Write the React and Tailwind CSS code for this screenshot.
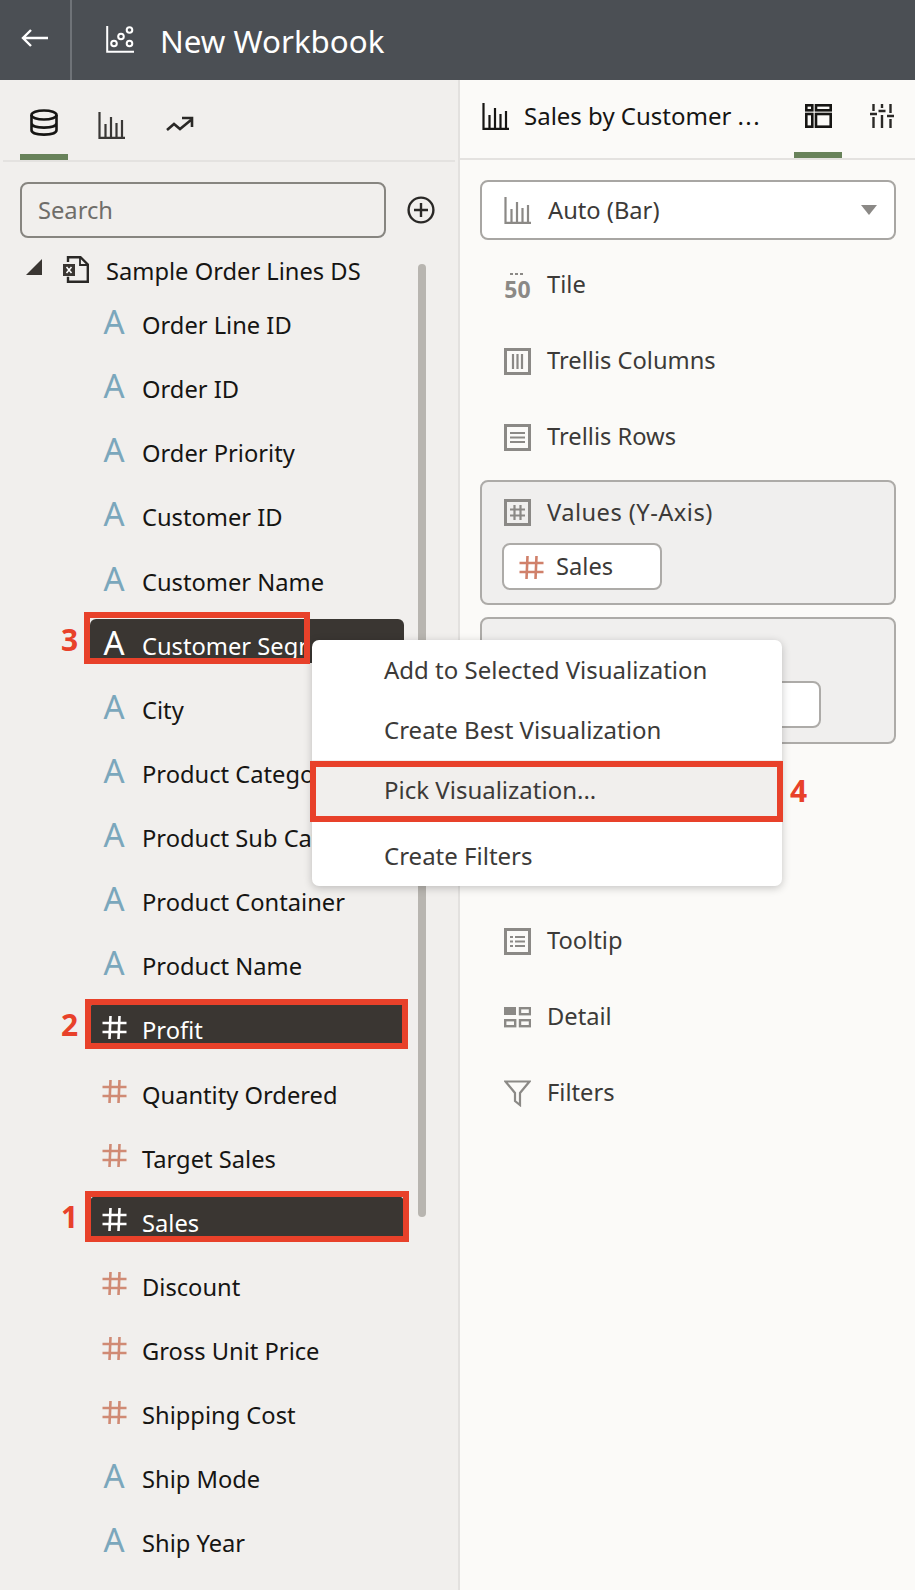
import React from "react";

const Bars = ({ c = "#161513", className = "" }) => (
  <svg viewBox="0 0 27 27" className={className} fill="none" stroke={c} strokeWidth="2.2">
    <path d="M1.5 0v25.8h25.5" />
    <path d="M7.5 12v13M13 5v20M18.5 11v14M24 8v17" strokeWidth="2.2" />
  </svg>
);

const HashIcon = ({ c = "#d08a74" }) => (
  <svg viewBox="0 0 25 25" className="w-[25px] h-[25px]" fill="none" stroke={c} strokeWidth="2.6">
    <path d="M0.5 8h24M0.5 17h24M8.5 1l-1 23M17.5 1l-1 23" />
  </svg>
);

const GrayBox = ({ children }) => (
  <svg viewBox="0 0 27 27" className="w-[27px] h-[27px] shrink-0" fill="none" stroke="#8b8986" strokeWidth="2.2">
    <rect x="1.5" y="1.5" width="24" height="24" strokeWidth="3" />
    {children}
  </svg>
);

const TileIcon = () => (
  <svg viewBox="0 0 27 27" className="w-[27px] h-[27px] shrink-0 overflow-visible">
    <path d="M6 2h3M11 2h3M16 2h3" stroke="#8b8986" strokeWidth="2" />
    <text x="13.5" y="26" textAnchor="middle" fontFamily="Noto Sans" fontWeight="700" fontSize="23" fill="#8b8986">50</text>
  </svg>
);

const fields = [
  ["A", "Order Line ID"],
  ["A", "Order ID"],
  ["A", "Order Priority"],
  ["A", "Customer ID"],
  ["A", "Customer Name"],
  ["A", "Customer Segment", true],
  ["A", "City"],
  ["A", "Product Category"],
  ["A", "Product Sub Category"],
  ["A", "Product Container"],
  ["A", "Product Name"],
  ["#", "Profit", true],
  ["#", "Quantity Ordered"],
  ["#", "Target Sales"],
  ["#", "Sales", true],
  ["#", "Discount"],
  ["#", "Gross Unit Price"],
  ["#", "Shipping Cost"],
  ["A", "Ship Mode"],
  ["A", "Ship Year"],
];

const FieldRow = ({ kind, label, selected }) => (
  <div className="h-[64.13px] ml-[90px] w-[314px] pt-[4px]">
    <div className={`h-[44px] flex items-start rounded-t-[6px] ${selected ? "bg-[#3a3632]" : ""}`}>
      <div className="w-[52px] h-[36px] flex items-center justify-center shrink-0 pr-[4px] pt-[12px]">
        {kind === "A" ? (
          <span className={`text-[33px] leading-[32px] ${selected ? "text-white" : "text-[#7ba7bc]"}`}>A</span>
        ) : (
          <HashIcon c={selected ? "#ffffff" : "#d08a74"} />
        )}
      </div>
      <span className={`whitespace-nowrap text-[23.7px] leading-[32px] mt-[11px] ${selected ? "text-white max-w-[165px] overflow-hidden" : "text-[#161513]"}`}>{label}</span>
    </div>
  </div>
);

const DropRow = ({ icon, label }) => (
  <div className="h-[76px] flex items-center gap-[16px] pl-[44px] text-[23.7px] text-[#3c3a38]">
    {icon}
    <span>{label}</span>
  </div>
);

const Box = ({ className, children }) => (
  <div className={`ml-[20px] mr-[19px] rounded-[8px] border-2 border-[#adaba8] bg-[#f0efee] ${className}`}>{children}</div>
);

const RedBox = ({ className }) => <div className={`absolute border-[6px] border-[#e8412a] ${className}`} />;
const Num = ({ className, children }) => (
  <div className={`absolute text-[30px] leading-[36px] font-bold text-[#e8412a] ${className}`}>{children}</div>
);

export default function App() {
  return (
    <div className="relative w-[915px] h-[1590px] overflow-hidden bg-[#fbfaf8] font-['Noto_Sans',sans-serif]">
      <header className="h-[80px] bg-[#4b4f54] flex items-center text-white">
        <div className="w-[72px] h-full border-r-2 border-[#6f7378] flex items-center pl-[21px]">
          <svg viewBox="0 0 27 20" className="w-[27px] h-[20px] mt-[-4px]" fill="none" stroke="#fff" strokeWidth="2.4">
            <path d="M27 10H2M10 2l-8 8 8 8" />
          </svg>
        </div>
        <svg viewBox="0 0 28 27" className="w-[28px] h-[27px] ml-[34px] mt-[-2px]" fill="none" stroke="#fff" strokeWidth="2">
          <path d="M1.2 0v25.8h27" />
          <circle cx="8" cy="17.5" r="2.8" />
          <circle cx="15" cy="10.5" r="2.8" />
          <circle cx="23.5" cy="4" r="2.8" />
          <circle cx="23.5" cy="17.5" r="2.8" />
        </svg>
        <h1 className="ml-[26px] mt-[1px] text-[31.3px] leading-[40px] font-normal">New Workbook</h1>
      </header>

      <div className="flex h-[1510px]">
        <aside className="w-[460px] shrink-0 bg-[#f1efed] border-r-2 border-[#e3e1df]">
          <div className="h-[82px] mx-[3px] border-b-2 border-[#e4e2e0] flex items-start pl-[17px]">
            <div className="w-[48px] h-[80px] border-b-[6px] border-[#68825a] flex items-center justify-center">
              <svg viewBox="0 0 28 27" className="w-[28px] h-[27px] mt-[10px]" fill="none" stroke="#161513" strokeWidth="2.6">
                <ellipse cx="14" cy="6" rx="12.5" ry="4.5" />
                <path d="M1.5 6v15c0 3 5.5 4.6 12.5 4.6s12.5-1.6 12.5-4.6V6M1.5 14c0 3 5.5 4.6 12.5 4.6s12.5-1.6 12.5-4.6" />
              </svg>
            </div>
            <div className="ml-[30px] h-[80px] flex items-center">
              <Bars c="#3a3836" className="w-[27px] h-[27px] mt-[10px]" />
            </div>
            <div className="ml-[41px] h-[80px] flex items-center">
              <svg viewBox="0 0 28 20" className="w-[28px] h-[20px] mt-[10px]" fill="none" stroke="#2a2826" strokeWidth="2.6">
                <path d="M1 15l7-6 6 5 11-9M16 3h10v9" />
              </svg>
            </div>
          </div>

          <div className="flex items-center mt-[20px] pl-[20px]">
            <div className="w-[366px] h-[56px] rounded-[8px] border-2 border-[#878580] flex items-center pl-[16px] pt-[2px] text-[23.7px] text-[#6f6d69]">Search</div>
            <svg viewBox="0 0 28 28" className="w-[28px] h-[28px] ml-[21px]" fill="none" stroke="#2a2826" strokeWidth="2.4">
              <circle cx="14" cy="14" r="12.4" />
              <path d="M14 7v14M7 14h14" strokeWidth="2.4" />
            </svg>
          </div>

          <div className="h-[56px] mt-[6px] flex items-center text-[23.7px] text-[#161513] pl-[26px] w-[430px]">
            <svg viewBox="0 0 16 16" className="w-[16px] h-[16px] mb-[10px]"><path d="M16 0v16H0z" fill="#3a3632" /></svg>
            <svg viewBox="0 0 26 27" className="w-[26px] h-[27px] ml-[21px] mb-[5px]" fill="none" stroke="#2a2826" strokeWidth="2.4">
              <path d="M5 6V1.2h12.5l7.3 7.3v17.3H5v-5" />
              <path d="M17 1v8h8" strokeWidth="1.8" />
              <rect x="0" y="8" width="12" height="12" fill="#3a3632" stroke="none" />
              <path d="M3.5 11l5 6M8.5 11l-5 6" stroke="#fff" strokeWidth="1.6" />
            </svg>
            <span className="ml-[17px] whitespace-nowrap">Sample Order Lines DS</span>
          </div>

          <div className="mt-[-6px]">
            {fields.map(([kind, label, sel]) => (
              <FieldRow key={label} kind={kind} label={label} selected={sel} />
            ))}
          </div>
        </aside>

        <main className="flex-1">
          <div className="h-[80px] border-b-2 border-[#e4e2e0] flex items-start">
            <div className="h-[72px] flex items-center pl-[22px]">
              <Bars className="w-[27px] h-[27px]" />
            </div>
            <div className="h-[72px] flex items-center ml-[15px] text-[24px] text-[#161513] w-[270px] whitespace-nowrap">
              Sales by Customer <span className="ml-[6px] tracking-[1.5px]">...</span>
            </div>
            <div className="w-[48px] h-[78px] border-b-[6px] border-[#68825a] flex items-center justify-center">
              <svg viewBox="0 0 27 24" className="w-[27px] h-[24px]" fill="none" stroke="#161513" strokeWidth="2.6">
                <rect x="1.3" y="1.3" width="6" height="5" />
                <rect x="11" y="1.3" width="14.7" height="5" />
                <rect x="1.3" y="10" width="6" height="12.7" />
                <rect x="11" y="10" width="14.7" height="12.7" />
              </svg>
            </div>
            <div className="h-[72px] flex items-center ml-[28px]">
              <svg viewBox="0 0 24 24" className="w-[24px] h-[24px]" fill="none" stroke="#2a2826" strokeWidth="2.4">
                <path d="M3.5 0v7M3.5 13v11M12 0v4M12 11v13M20.5 0v9M20.5 15v9M0 10h7M8.5 7h7M17 12h7" />
              </svg>
            </div>
          </div>

          <div className="ml-[20px] mr-[19px] mt-[20px] h-[60px] bg-white rounded-[8px] border-2 border-[#a8a6a3] flex items-center text-[23.7px] text-[#3c3a38] pl-[22px] pr-[17px]">
            <Bars c="#8b8986" className="w-[27px] h-[27px] shrink-0" />
            <span className="ml-[17px] pt-[2px] flex-1">Auto (Bar)</span>
            <svg viewBox="0 0 16 10" className="w-[16px] h-[10px]"><path d="M0 0h16l-8 10z" fill="#8b8986" /></svg>
          </div>

          <div className="mt-[7px]">
            <DropRow icon={<TileIcon />} label="Tile" />
            <DropRow icon={<GrayBox><path d="M9 6v15M13.5 6v15M18 6v15" /></GrayBox>} label="Trellis Columns" />
            <DropRow icon={<GrayBox><path d="M6 9h15M6 13.5h15M6 18h15" /></GrayBox>} label="Trellis Rows" />
          </div>

          <Box className="mt-[5px] h-[125px]">
            <div className="flex items-center gap-[16px] pl-[22px] pt-[14px] text-[23.7px] leading-[32px] text-[#3c3a38]">
              <GrayBox><path d="M6 10.5h15M6 16.5h15M10.5 6v15M16.5 6v15" /></GrayBox>
              <span className="tracking-[0.45px]">Values (Y-Axis)</span>
            </div>
            <div className="ml-[20px] mt-[15px] w-[160px] h-[47px] bg-white rounded-[8px] border-2 border-[#adaba8] flex items-center pl-[15px] gap-[12px] pt-[1px] text-[23.7px] text-[#3c3a38]">
              <HashIcon c="#d0806a" />
              <span>Sales</span>
            </div>
          </Box>
          <Box className="mt-[12px] h-[127px]">
            <div className="ml-[21px] mt-[62px] w-[318px] h-[47px] bg-white rounded-[8px] border-2 border-[#adaba8]" />
          </Box>

          <div className="mt-[159px]">
            <DropRow icon={<GrayBox><path d="M6 9h3M11 9h10M6 13.5h3M11 13.5h10M6 18h3M11 18h10" /></GrayBox>} label="Tooltip" />
            <DropRow
              icon={
                <svg viewBox="0 0 27 27" className="w-[27px] h-[27px] shrink-0" fill="none" stroke="#8b8986" strokeWidth="2.4">
                  <rect x="0" y="3" width="12" height="8" fill="#8b8986" stroke="none" />
                  <rect x="16" y="4.2" width="10" height="6" />
                  <rect x="1.2" y="16.2" width="10" height="6" />
                  <rect x="16" y="16.2" width="10" height="6" />
                </svg>
              }
              label="Detail"
            />
            <DropRow
              icon={
                <svg viewBox="0 0 27 27" className="w-[27px] h-[27px] shrink-0" fill="none" stroke="#8b8986" strokeWidth="2.2">
                  <path d="M1.5 1.5h24L16 13v12l-5-4v-8z" />
                </svg>
              }
              label="Filters"
            />
          </div>
        </main>
      </div>

      {/* scrollbar */}
      <div className="absolute left-[418px] top-[264px] w-[8px] h-[953px] rounded-full bg-[#b8b5b0]" />

      {/* context menu */}
      <div className="absolute left-[312px] top-[640px] w-[470px] h-[246px] bg-white rounded-[7px] shadow-[0_2px_8px_rgba(0,0,0,0.22)] text-[24px] text-[#3c3a38] flex flex-col">
        <div className="h-[60px] flex items-center pl-[72px]">Add to Selected Visualization</div>
        <div className="h-[60px] flex items-center pl-[72px]">Create Best Visualization</div>
        <div className="h-[60px] bg-[#f1efed] flex items-center pl-[72px]">Pick Visualization...</div>
        <div className="h-[66px] pt-[6px] flex items-center pl-[72px]">Create Filters</div>
      </div>

      {/* annotations */}
      <RedBox className="left-[84px] top-[612px] w-[226px] h-[52px]" />
      <RedBox className="left-[85px] top-[999px] w-[323px] h-[50px]" />
      <RedBox className="left-[85px] top-[1191px] w-[324px] h-[51px]" />
      <RedBox className="left-[310px] top-[761px] w-[473px] h-[61px]" />
      <Num className="left-[61px] top-[622px]">3</Num>
      <Num className="left-[61px] top-[1007px]">2</Num>
      <Num className="left-[61px] top-[1199px]">1</Num>
      <Num className="left-[790px] top-[773px]">4</Num>
    </div>
  );
}
